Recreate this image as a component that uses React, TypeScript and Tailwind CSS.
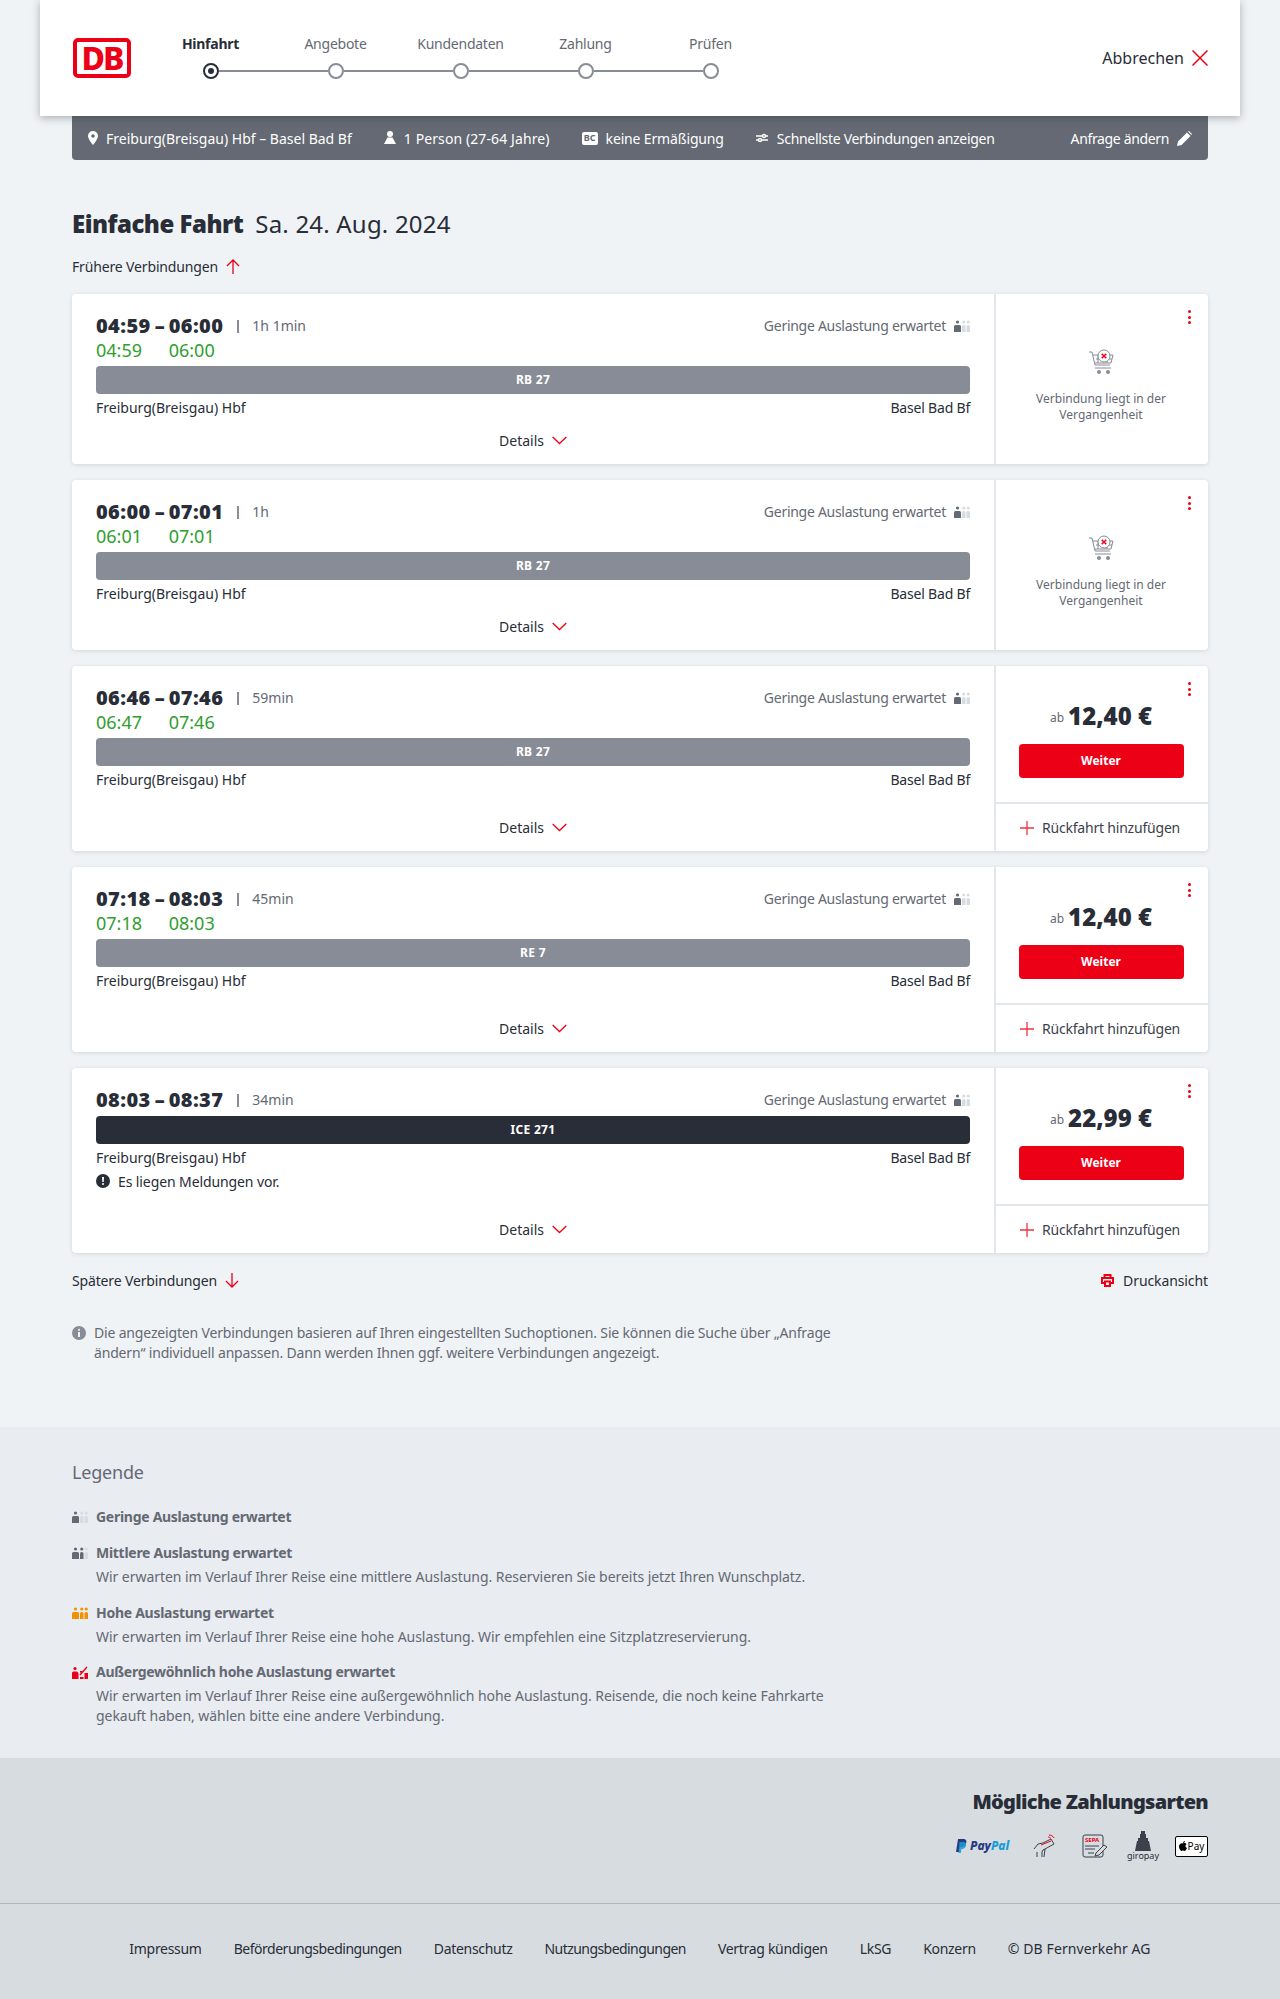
import { ReactNode } from 'react';

const red = '#ec0016';

function Occupancy({ level = 1, color = '#646973', off = '#d7dce1' }: { level?: number; color?: string; off?: string }) {
  const person = (x: number, w: number, on: boolean) => (
    <g key={x} fill={on ? color : off}>
      <circle cx={x + w / 2} cy="2" r="1.6" />
      <path d={`M${x} 12V6.5a1.5 1.5 0 0 1 1.5-1.5h${w - 3}a1.5 1.5 0 0 1 1.5 1.5V12z`} />
    </g>
  );
  return (
    <svg width="16" height="12" viewBox="0 0 16 12" className="shrink-0">
      {person(0, 7, level >= 1)}
      {person(8, 3.5, level >= 2)}
      {person(12.5, 3.5, level >= 3)}
    </svg>
  );
}

function OccupancyFull() {
  return (
    <svg width="16" height="13" viewBox="0 0 16 13" className="shrink-0">
      <g fill={red}>
        <circle cx="3" cy="2.5" r="1.6" />
        <path d="M0 13V7a1.5 1.5 0 0 1 1.5-1.5H5L6.5 7v6zM8 13v-2h3.500v2zM12.500 13V7H16v6z" />
        <path d="M7.500 8.500 14.500.5l1 1-7 8z" />
        <path d="M8 6.500V5h3l-2 2z" />
      </g>
    </svg>
  );
}

function Cart() {
  return (
    <svg width="27" height="27" viewBox="0 0 27 27" fill="none" stroke="#878c96" strokeWidth="1">
      <path d="M1 3h3l3 13h15" />
      <path d="M5 6h20l-2 8H7" />
      <path d="M8 10h16M10 6v8M19 6v8" />
      <circle cx="16" cy="7" r="6" fill="#fff" />
      <path d="M13.700 4.700l4.600 4.600M18.300 4.700l-4.600 4.600" stroke={red} strokeWidth="1.500" />
      <circle cx="11" cy="23" r="2" fill="#878c96" stroke="none" />
      <circle cx="20" cy="23" r="2" fill="#878c96" stroke="none" />
      <path d="M7 19h16" />
    </svg>
  );
}

function Chevron() {
  return (
    <svg width="15" height="9" viewBox="0 0 15 9" fill="none" stroke={red} strokeWidth="1.300">
      <path d="M.7 1 7.500 7.500 14.300 1" />
    </svg>
  );
}

function Kebab() {
  return (
    <div className="flex flex-col gap-[2.5px]">
      <span className="size-[3px] rounded-full bg-[#ec0016]" />
      <span className="size-[3px] rounded-full bg-[#ec0016]" />
      <span className="size-[3px] rounded-full bg-[#ec0016]" />
    </div>
  );
}

type Trip = {
  dep: string;
  arr: string;
  dur: string;
  liveDep?: string;
  liveArr?: string;
  train: string;
  price?: string;
  notice?: boolean;
};

const trips: Trip[] = [
  { dep: '04:59', arr: '06:00', dur: '1h 1min', liveDep: '04:59', liveArr: '06:00', train: 'RB 27' },
  { dep: '06:00', arr: '07:01', dur: '1h', liveDep: '06:01', liveArr: '07:01', train: 'RB 27' },
  { dep: '06:46', arr: '07:46', dur: '59min', liveDep: '06:47', liveArr: '07:46', train: 'RB 27', price: '12,40 €' },
  { dep: '07:18', arr: '08:03', dur: '45min', liveDep: '07:18', liveArr: '08:03', train: 'RE 7', price: '12,40 €' },
  { dep: '08:03', arr: '08:37', dur: '34min', train: 'ICE 271', price: '22,99 €', notice: true },
];

function TripCard({ trip }: { trip: Trip }) {
  const ice = trip.train.startsWith('ICE');
  return (
    <div className={`flex rounded-[4px] bg-white shadow-[0_1px_4px_rgba(40,45,55,0.14)] ${trip.price ? 'h-[185px]' : 'h-[170px]'}`}>
      <div className="flex w-[924px] shrink-0 flex-col border-r-2 border-[#e3e7ec] pl-6 pr-6 pt-5">
        <div className="grid grid-cols-[auto_auto_auto_1fr]">
          <div className="h-6 text-[20px] leading-6 font-black tracking-[0.4px] text-[#282d37]">{trip.dep}</div>
          <div className="h-6 px-[4px] text-[20px] leading-6 font-black text-[#282d37]">–</div>
          <div className="h-6 text-[20px] leading-6 font-black tracking-[0.4px] text-[#282d37]">{trip.arr}</div>
          <div className="flex h-6 items-center text-[14px] text-[#646973]">
            <span className="ml-[14px] mr-[13px] h-[13px] w-[2px] bg-[#878c96]" />
            <span className="mb-[2px]">{trip.dur}</span>
            <span className="mb-[2px] ml-auto mr-2 tracking-[-0.28px]">Geringe Auslastung erwartet</span>
            <Occupancy />
          </div>
          {trip.liveDep && (
            <>
              <div className="h-6 text-[18px] leading-6 text-[#2f9e2f]">{trip.liveDep}</div>
              <div />
              <div className="h-6 text-[18px] leading-6 text-[#2f9e2f]">{trip.liveArr}</div>
            </>
          )}
        </div>
        <div className={`mt-1 flex h-7 items-center justify-center rounded-[4px] text-[12px] font-bold tracking-[0.3px] text-white ${ice ? 'bg-[#282d37]' : 'bg-[#878c96]'}`}>
          {trip.train}
        </div>
        <div className="mt-px flex h-6 items-center justify-between text-[14px] text-[#282d37]">
          <span>Freiburg(Breisgau) Hbf</span>
          <span className="tracking-[-0.2px]">Basel Bad Bf</span>
        </div>
        {trip.notice && (
          <div className="flex h-6 items-center gap-2 text-[14px] tracking-[-0.1px] text-[#282d37]">
            <svg width="14" height="14" viewBox="0 0 14 14">
              <circle cx="7" cy="7" r="7" fill="#282d37" />
              <path d="M6 3h2l-.3 5H6.300z" fill="#fff" />
              <circle cx="7" cy="10" r="1" fill="#fff" />
            </svg>
            Es liegen Meldungen vor.
          </div>
        )}
        <div className="mt-auto mb-[11px] flex h-[26px] items-center justify-center gap-2 text-[14px] text-[#282d37]">
          Details
          <Chevron />
        </div>
      </div>
      <div className="relative flex flex-1 flex-col">
        <div className="absolute top-4 right-[17px]">
          <Kebab />
        </div>
        {trip.price ? (
          <>
            <div className="flex h-[138px] flex-col items-center border-b-2 border-[#e3e7ec] pr-[2px] pt-[33px]">
              <div className="flex h-[34px] items-center gap-1">
                <span className="mt-1 text-[12px] text-[#646973]">ab</span>
                <span className="text-[24px] font-black text-[#282d37]">{trip.price}</span>
              </div>
              <button className="mt-[11px] h-[34px] w-[165px] rounded-[4px] bg-[#ec0016] text-[12px] font-bold text-white">Weiter</button>
            </div>
            <div className="flex flex-1 items-center justify-center gap-2 pr-[4px] text-[14px] tracking-[-0.2px] text-[#3c414b]">
              <svg width="14" height="14" viewBox="0 0 14 14" stroke={red} strokeWidth="1.300" opacity="0.8">
                <path d="M7 0v14M0 7h14" />
              </svg>
              Rückfahrt hinzufügen
            </div>
          </>
        ) : (
          <div className="flex flex-col items-center pr-[2px] pt-[55px] text-center text-[12px] leading-4 text-[#646973]">
            <Cart />
            <p className="mt-[15px] w-[150px]">Verbindung liegt in der Vergangenheit</p>
          </div>
        )}
      </div>
    </div>
  );
}

function Arrow({ up }: { up?: boolean }) {
  return (
    <svg width="14" height="15" viewBox="0 0 14 15" fill="none" stroke={red} strokeWidth="1.300" className={up ? '' : 'rotate-180'}>
      <path d="M7 15V1M1 7l6-6 6 6" />
    </svg>
  );
}

function Step({ label, active }: { label: string; active?: boolean }) {
  return (
    <div className={`w-[125px] text-center text-[14px] leading-5 tracking-[-0.25px] ${active ? 'font-bold text-[#282d37]' : 'text-[#646973]'}`}>
      {label}
    </div>
  );
}

function Dot({ active }: { active?: boolean }) {
  return active ? (
    <span className="flex size-4 shrink-0 items-center justify-center rounded-full border-2 border-[#282d37] bg-white">
      <span className="size-[6px] rounded-full bg-[#282d37]" />
    </span>
  ) : (
    <span className="size-4 shrink-0 rounded-full border-2 border-[#878c96] bg-white" />
  );
}

function BarItem({ icon, children, className }: { icon: ReactNode; children: ReactNode; className?: string }) {
  return (
    <div className={`flex items-center ${className ?? ''}`}>
      {icon}
      {children}
    </div>
  );
}

function LegendItem({ icon, title, children }: { icon: ReactNode; title: string; children?: ReactNode }) {
  return (
    <div className="flex">
      <div className="flex h-5 w-6 shrink-0 items-center">{icon}</div>
      <div>
        <div className="h-5 text-[14px] leading-5 font-bold tracking-[-0.28px] text-[#646973]">{title}</div>
        {children && <p className="mt-1 w-[760px] text-[14px] leading-5 tracking-[-0.05px] text-[#646973]">{children}</p>}
      </div>
    </div>
  );
}

export default function App() {
  return (
    <div className="min-h-[1999px] bg-[#f0f3f5] font-['Noto_Sans',sans-serif] text-[#282d37]">
      <header className="relative z-10 mx-10 flex h-[116px] items-center bg-white pl-[33px] pr-8 shadow-[0_2px_8px_rgba(40,45,55,0.35)]">
        <div className="flex h-10 w-[58px] items-center justify-center rounded-[5px] border-[4px] border-[#ec0016] bg-white text-[32px] leading-none font-extrabold tracking-[-2px] text-[#ec0016]">
          DB
        </div>
        <div className="ml-[17px] flex h-full flex-col pt-[34px]">
          <div className="flex">
            <Step label="Hinfahrt" active />
            <Step label="Angebote" />
            <Step label="Kundendaten" />
            <Step label="Zahlung" />
            <Step label="Prüfen" />
          </div>
          <div className="mt-[9px] ml-[55px] flex items-center">
            <Dot active />
            <span className="h-[2px] w-[109px] bg-[#878c96]" />
            <Dot />
            <span className="h-[2px] w-[109px] bg-[#878c96]" />
            <Dot />
            <span className="h-[2px] w-[109px] bg-[#878c96]" />
            <Dot />
            <span className="h-[2px] w-[109px] bg-[#878c96]" />
            <Dot />
          </div>
        </div>
        <div className="ml-auto flex items-center gap-2 text-[16px] text-[#282d37]">
          Abbrechen
          <svg width="16" height="16" viewBox="0 0 16 16" stroke={red} strokeWidth="1.500">
            <path d="M.5.5l15 15M15.500.5l-15 15" />
          </svg>
        </div>
      </header>

      <div className="mx-[72px] flex h-11 items-center rounded-b-[4px] bg-[#646973] pl-4 pr-4 text-[14px] text-white">
        <BarItem
          icon={
            <svg width="10" height="14" viewBox="0 0 10 14" className="mr-2">
              <path d="M5 0a5 5 0 0 1 5 5c0 3-5 9-5 9S0 8 0 5a5 5 0 0 1 5-5zm0 3.200a1.800 1.800 0 1 0 0 3.600 1.800 1.800 0 0 0 0-3.600z" fill="#fff" />
            </svg>
          }
        >
          Freiburg(Breisgau) Hbf – Basel Bad Bf
        </BarItem>
        <BarItem
          className="ml-8"
          icon={
            <svg width="12" height="14" viewBox="0 0 12 14" className="mr-2" fill="#fff">
              <circle cx="6" cy="3" r="3" />
              <path d="M3.500 6.500h5L12 13H0z" />
            </svg>
          }
        >
          <span className="tracking-[0.1px]">1 Person (27-64 Jahre)</span>
        </BarItem>
        <BarItem
          className="ml-[32px]"
          icon={
            <span className="mr-2 flex h-[13px] w-4 items-center justify-center rounded-[2px] bg-white text-[9px] font-bold text-[#646973]">BC</span>
          }
        >
          <span className="tracking-[-0.15px]">keine Ermäßigung</span>
        </BarItem>
        <BarItem
          className="ml-8"
          icon={
            <svg width="12" height="10" viewBox="0 0 12 10" className="mr-[9px]" fill="none" stroke="#fff" strokeWidth="1.500">
              <path d="M0 3h12M0 7h12" />
              <circle cx="8" cy="3" r="1.500" fill="#646973" />
              <circle cx="4" cy="7" r="1.500" fill="#646973" />
            </svg>
          }
        >
          <span className="tracking-[-0.3px]">Schnellste Verbindungen anzeigen</span>
        </BarItem>
        <div className="ml-auto flex items-center gap-2 tracking-[-0.35px]">
          Anfrage ändern
          <svg width="15" height="15" viewBox="0 0 15 15" fill="#fff">
            <path d="M0 15l1-4.500L10 1.500 13.500 5l-9 9zM11 .5l1-.5 3 3-.5 1z" />
          </svg>
        </div>
      </div>

      <main className="mx-[72px]">
        <div className="mt-[48px] flex h-8 items-center gap-[12px]">
          <h1 className="text-[24px] font-black tracking-[-0.5px] text-[#282d37]">Einfache Fahrt</h1>
          <span className="text-[24px] tracking-[0.2px] text-[#282d37]">Sa. 24. Aug. 2024</span>
        </div>
        <div className="mt-[14px] flex h-6 items-center gap-2 text-[14px] tracking-[-0.15px] text-[#282d37]">
          Frühere Verbindungen
          <Arrow up />
        </div>
        <div className="mt-[16px] flex flex-col gap-4">
          {trips.map((t) => (
            <TripCard key={t.dep} trip={t} />
          ))}
        </div>
        <div className="mt-[15px] flex h-6 items-center text-[14px] text-[#282d37]">
          <div className="flex items-center gap-2 tracking-[-0.15px]">
            Spätere Verbindungen
            <Arrow />
          </div>
          <div className="ml-auto flex items-center gap-[9px] tracking-[-0.1px]">
            <svg width="13" height="13" viewBox="0 0 13 13" fill="none" stroke={red} strokeWidth="2">
              <path d="M3 9H1V4h11v5h-2M3.500 4V1h6v3M4 7.500h5V12H4z" />
            </svg>
            Druckansicht
          </div>
        </div>
        <div className="mt-[31px] flex gap-2 text-[14px] leading-5 tracking-[-0.17px] text-[#646973]">
          <svg width="14" height="14" viewBox="0 0 14 14" className="mt-[3px] shrink-0">
            <circle cx="7" cy="7" r="7" fill="#878c96" />
            <circle cx="7" cy="3.800" r="1.100" fill="#f0f3f5" />
            <path d="M6 6h2v5H6z" fill="#f0f3f5" />
          </svg>
          <p className="w-[770px]">
            Die angezeigten Verbindungen basieren auf Ihren eingestellten Suchoptionen. Sie können die Suche über „Anfrage ändern“ individuell anpassen. Dann werden Ihnen ggf. weitere Verbindungen angezeigt.
          </p>
        </div>
      </main>

      <section className="mt-[64px] h-[331px] bg-[#e9ecf1] px-[72px] pt-[32px]">
        <h2 className="text-[18px] leading-[26px] tracking-[-0.2px] text-[#646973]">Legende</h2>
        <div className="mt-[22px] flex flex-col">
          <LegendItem icon={<Occupancy />} title="Geringe Auslastung erwartet" />
          <div className="mt-4">
            <LegendItem icon={<Occupancy level={2} />} title="Mittlere Auslastung erwartet">
              Wir erwarten im Verlauf Ihrer Reise eine mittlere Auslastung. Reservieren Sie bereits jetzt Ihren Wunschplatz.
            </LegendItem>
          </div>
          <div className="mt-[16px]">
            <LegendItem icon={<Occupancy level={3} color="#f39200" />} title="Hohe Auslastung erwartet">
              Wir erwarten im Verlauf Ihrer Reise eine hohe Auslastung. Wir empfehlen eine Sitzplatzreservierung.
            </LegendItem>
          </div>
          <div className="mt-[15px]">
            <LegendItem icon={<OccupancyFull />} title="Außergewöhnlich hohe Auslastung erwartet">
              Wir erwarten im Verlauf Ihrer Reise eine außergewöhnlich hohe Auslastung. Reisende, die noch keine Fahrkarte gekauft haben, wählen bitte eine andere Verbindung.
            </LegendItem>
          </div>
        </div>
      </section>

      <section className="flex h-[145px] flex-col items-end bg-[#d7dce1] px-[72px] pt-[30px]">
        <h2 className="text-[20px] leading-7 font-black tracking-[-0.7px] text-[#282d37]">Mögliche Zahlungsarten</h2>
        <div className="mt-[14px] flex h-8 items-center">
          <div className="flex w-[56px] items-center gap-[3px]">
            <svg width="11" height="14" viewBox="0 0 11 14">
              <path d="M2 0h5c3 0 4 2 3 4.500C9 7 7 8 5 8H4l-1 5H0z" fill="#253b80" />
              <path d="M3.500 3h5c2 1 2 3 1 5-1 1.500-2 2-4 2l-.7 4H2.500z" fill="#179bd7" opacity="0.85" />
            </svg>
            <span className="text-[12px] leading-none font-extrabold italic text-[#253b80]">
              Pay<span className="text-[#179bd7]">Pal</span>
            </span>
          </div>
          <svg width="24" height="24" viewBox="0 0 24 24" fill="none" stroke="#3c414b" strokeWidth="1" className="ml-[21px]">
            <path d="M1 15l4-5 5-1 8-4 3 5-9 5-2 1-1 2v5M4 23v-5M12 15l-1 8" />
            <path d="M8 11l10-4M16 1c2 0 4 1 5 3M15 3c1 0 2 .5 3 1.500" stroke={red} />
          </svg>
          <svg width="26" height="24" viewBox="0 0 26 24" className="ml-[25px]">
            <rect x="1" y="1" width="20" height="22" rx="2" fill="none" stroke="#3c414b" strokeWidth="1" />
            <text x="3" y="8" fontSize="6" fontWeight="700" fill={red}>SEPA</text>
            <path d="M3 12h14M3 15h10M6 19h6" stroke="#3c414b" strokeWidth="1" />
            <path d="M14 19l8-8 3 2-8 8-4 1z" fill="#d7dce1" stroke="#3c414b" strokeWidth="1" />
          </svg>
          <div className="ml-[18px] flex w-[34px] flex-col items-center">
            <svg width="16" height="20" viewBox="0 0 16 20" fill="#3c414b">
              <path d="M6 0h4v3h1v4h2v3h1l2 10H0l2-10h1V7h2V3h1z" />
            </svg>
            <span className="text-[9px] leading-[10px] text-[#282d37]">giropay</span>
          </div>
          <div className="ml-[15px] flex h-[21px] w-[33px] items-center justify-center rounded-[2px] border border-black bg-white text-[10px] leading-none text-black">
            <svg width="8" height="10" viewBox="0 0 8 10" className="mr-px" fill="#000">
              <path d="M4 2.500C5 1.800 7 2 7.500 3.300 6 4 6 6.500 8 7 7.400 8.500 6.500 10 5.500 10 4.800 10 4.500 9.600 4 9.600s-1 .4-1.500.4C1.500 10 0 7.500 0 5.500 0 3 2.500 1.700 4 2.500zM4 2c0-1 .8-2 2-2 0 1.200-1 2-2 2z" />
            </svg>
            Pay
          </div>
        </div>
      </section>

      <footer className="flex h-[96px] items-center justify-center gap-8 border-t border-[#afb4bb] bg-[#d7dce1] pb-[6px] text-[14px] tracking-[-0.3px] text-[#282d37]">
        <span>Impressum</span>
        <span className="tracking-[-0.48px]">Beförderungsbedingungen</span>
        <span>Datenschutz</span>
        <span className="tracking-[-0.56px]">Nutzungsbedingungen</span>
        <span>Vertrag kündigen</span>
        <span>LkSG</span>
        <span>Konzern</span>
        <span className="tracking-[0.1px]">© DB Fernverkehr AG</span>
      </footer>
    </div>
  );
}
